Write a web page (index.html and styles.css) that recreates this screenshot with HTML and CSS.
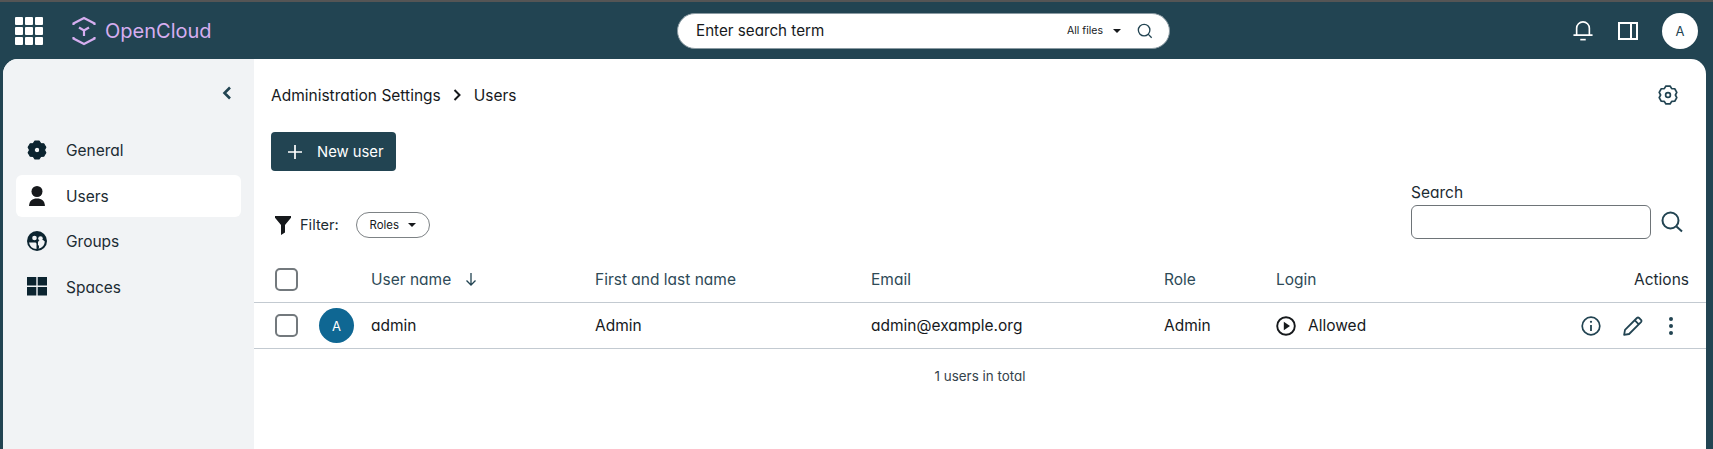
FILE: index.html
```html
<!DOCTYPE html>
<html lang="en">
<head>
<meta charset="utf-8">
<title>OpenCloud - Users</title>
<link rel="stylesheet" href="styles.css">
</head>
<body>
<header class="topbar">
  <div class="brand">
    <svg class="apps" viewBox="0 0 28 28"><g fill="#fff"><rect x="0" y="0" width="8" height="8" rx="1"/><rect x="10" y="0" width="8" height="8" rx="1"/><rect x="20" y="0" width="8" height="8" rx="1"/><rect x="0" y="10" width="8" height="8" rx="1"/><rect x="10" y="10" width="8" height="8" rx="1"/><rect x="20" y="10" width="8" height="8" rx="1"/><rect x="0" y="20" width="8" height="8" rx="1"/><rect x="10" y="20" width="8" height="8" rx="1"/><rect x="20" y="20" width="8" height="8" rx="1"/></g></svg>
    <svg class="logo" viewBox="0 0 24 30" fill="none" stroke="#d6aef0" stroke-width="2.2"><path d="M1.5 9V7.5L12 2l10.500 5.500V9"/><path d="M1.500 21v1.500L12 28l10.500-5.500V21"/><path d="M7 11.500l5 3 5-3M12 14.500V20"/></svg>
    <span class="brand-name">OpenCloud</span>
  </div>
  <div class="global-search">
    <span class="gs-text">Enter search term</span>
    <span class="gs-scope">All files</span>
    <span class="caret gs-caret"></span>
    <svg class="gs-icon" viewBox="0 0 18 18" fill="none" stroke="#224452" stroke-width="1.500"><circle cx="8" cy="8" r="6.500"/><path d="M12.500 12.500L16.500 16.500"/></svg>
  </div>
  <div class="top-actions">
    <svg class="icon-bell" viewBox="0 0 22 24" fill="none" stroke="#fff" stroke-width="1.800"><path d="M0.500 16.500h21M4 16.500V9a7 7 0 0 1 14 0v7.500"/><path d="M8 21.500h6"/></svg>
    <svg class="icon-panel" viewBox="0 0 20 18" fill="none" stroke="#fff" stroke-width="2"><rect x="1" y="1" width="18" height="16"/><path d="M13 1v16"/></svg>
    <span class="top-avatar">A</span>
  </div>
</header>

<div class="shell">
  <aside class="sidebar">
    <div class="collapse">
      <svg viewBox="0 0 10 14" fill="none" stroke="#224452" stroke-width="2.600"><path d="M8 1.500L2.500 7 8 12.500"/></svg>
    </div>
    <nav class="nav">
      <a class="nav-item">
        <svg viewBox="0 0 20 20"><path fill="#0c2430" stroke="#0c2430" stroke-width="1.200" stroke-linejoin="round" fill-rule="evenodd" d="M7.930 1.040L12.070 1.040L13.700 3.590L16.730 3.730L18.800 7.310L17.400 10L18.800 12.690L16.730 16.270L13.700 16.410L12.070 18.960L7.930 18.960L6.300 16.410L3.270 16.270L1.200 12.690L2.600 10L1.200 7.310L3.270 3.730L6.300 3.590ZM10 7.200a2.800 2.800 0 1 0 0 5.600a2.800 2.800 0 0 0 0-5.600Z"/></svg>
        <span>General</span>
      </a>
      <a class="nav-item nav-active">
        <svg viewBox="0 0 20 20"><circle cx="10" cy="5.500" r="5.500" fill="#16191c"/><path fill="#16191c" d="M2 21c0-6 3-8.500 8-8.500s8 2.500 8 8.500z"/></svg>
        <span>Users</span>
      </a>
      <a class="nav-item">
        <svg viewBox="0 0 20 20"><circle cx="10" cy="10" r="10" fill="#0c2430"/><circle cx="7.500" cy="7" r="2.300" fill="#f1f3f5"/><circle cx="13.500" cy="7.500" r="2.300" fill="#f1f3f5"/><path fill="#f1f3f5" d="M2 11.500h6.500a2 2 0 0 1 1 1.500v5A8 8 0 0 1 2 11.500zM11 11a4 4 0 0 1 6.800-.5 8 8 0 0 1-6.300 7.300c1-2 .5-3-.5-4z"/></svg>
        <span>Groups</span>
      </a>
      <a class="nav-item">
        <svg viewBox="0 0 20 20"><g fill="#0c2430"><rect width="9.300" height="8.500"/><rect x="10.700" width="9.300" height="8.500"/><rect y="10" width="9.300" height="8.500"/><rect x="10.700" y="10" width="9.300" height="8.500"/></g></svg>
        <span>Spaces</span>
      </a>
    </nav>
  </aside>

  <main class="content">
    <div class="crumb-row">
      <div class="crumbs">
        <span>Administration Settings</span>
        <svg class="crumb-sep" viewBox="0 0 8 12" fill="none" stroke="#16191c" stroke-width="2"><path d="M1.500 1l5 5-5 5"/></svg>
        <span>Users</span>
      </div>
      <svg class="gear" viewBox="0 0 20 20" fill="none" stroke="#224452" stroke-width="1.700" stroke-linejoin="round"><path d="M7.930 1.040L12.070 1.040L13.700 3.590L16.730 3.730L18.800 7.310L17.400 10L18.800 12.690L16.730 16.270L13.700 16.410L12.070 18.960L7.930 18.960L6.300 16.410L3.270 16.270L1.200 12.690L2.600 10L1.200 7.310L3.270 3.730L6.300 3.590Z"/><circle cx="10" cy="10" r="2.400"/></svg>
    </div>
    <button class="new-user">
      <svg viewBox="0 0 14 14" fill="none" stroke="#fff" stroke-width="1.700"><path d="M7 0v14M0 7h14"/></svg>
      <span>New user</span>
    </button>
    <div class="tools">
      <div class="filter">
        <svg class="funnel" viewBox="0 0 16 19"><path fill="#16191c" d="M0 0h16v1.800L10 9v7.500L6 19V9L0 1.800z"/></svg>
        <span class="filter-label">Filter:</span>
        <span class="pill">Roles<span class="caret"></span></span>
      </div>
      <div class="search">
        <label class="search-label">Search</label>
        <div class="search-row">
          <span class="search-input"></span>
          <svg class="search-icon" viewBox="0 0 22 22" fill="none" stroke="#224452" stroke-width="2"><circle cx="9.500" cy="9.500" r="8"/><path d="M15.500 15.500l5.500 5"/></svg>
        </div>
      </div>
    </div>

    <div class="table">
      <div class="row head">
        <span class="checkbox"></span>
        <span></span>
        <span class="name-head">User name
          <svg class="sort" viewBox="0 0 12 13" fill="none" stroke="#224452" stroke-width="1.300"><path d="M6 0v12M1.500 7.500L6 12l4.500-4.500"/></svg>
        </span>
        <span>First and last name</span>
        <span>Email</span>
        <span>Role</span>
        <span>Login</span>
        <span class="actions-head">Actions</span>
      </div>
      <div class="row body">
        <span class="checkbox"></span>
        <span class="avatar">A</span>
        <span>admin</span>
        <span>Admin</span>
        <span>admin@example.org</span>
        <span>Admin</span>
        <span class="login">
          <svg viewBox="0 0 20 20" fill="none" stroke="#16191c" stroke-width="1.900"><circle cx="10" cy="10" r="8.800"/><path fill="#16191c" stroke="none" d="M7.800 5.800L14 10l-6.200 4.200z"/></svg>
          Allowed
        </span>
        <span class="row-actions">
          <svg class="a-info" viewBox="0 0 20 20" fill="none" stroke="#224452" stroke-width="1.700"><circle cx="10" cy="10" r="8.800"/><path d="M10 9v6" stroke-width="1.800"/><circle cx="10" cy="5.800" r="1.100" fill="#224452" stroke="none"/></svg>
          <svg class="a-edit" viewBox="0 0 18 18" fill="none" stroke="#224452" stroke-width="1.600"><path d="M1 17l.8-4.500L12.500 1.800a1.500 1.500 0 0 1 2 0l1.700 1.700a1.500 1.500 0 0 1 0 2L5.500 16.200z" stroke-linejoin="round"/><path d="M10.500 3.800l3.700 3.700"/></svg>
          <svg class="a-more" viewBox="0 0 4 18"><g fill="#224452"><circle cx="2" cy="2" r="2"/><circle cx="2" cy="9" r="2"/><circle cx="2" cy="16" r="2"/></g></svg>
        </span>
      </div>
    </div>
    <p class="total">1 users in total</p>
  </main>
</div>
</body>
</html>
```

FILE: styles.css
```css
* { box-sizing: border-box; }
html, body { height: 100%; }
body {
  margin: 0;
  height: 449px;
  overflow: hidden;
  background: #224452;
  border-top: 2px solid #555;
  font-family: "Inter", "Lato", sans-serif;
  font-feature-settings: "cv11" 1;
  font-size: 15.500px;
  color: #16191c;
  display: flex;
  flex-direction: column;
}
svg { display: block; flex: none; }

.topbar {
  height: 57px;
  flex: none;
  display: flex;
  align-items: center;
  justify-content: space-between;
  padding: 0 15px 0 15px;
}
.brand { display: flex; align-items: center; width: 500px; }
.apps { width: 28px; height: 28px; }
.logo { width: 24px; height: 30px; margin-left: 29px; }
.brand-name { margin-left: 9px; color: #d6aef0; font-size: 20px; }

.global-search {
  width: 493px;
  height: 36px;
  background: #fff;
  border: 1px solid #8a9aa2;
  border-radius: 18px;
  display: flex;
  align-items: center;
  padding: 0 16px 0 18px;
  margin-left: 162px;
  margin-right: auto;
  font-size: 15.200px;
}
.gs-text { flex: 1; }
.gs-scope { font-size: 10.500px; }
.gs-caret { margin: 0 0 0 10px; }
.gs-icon { width: 16px; height: 16px; margin-left: 16px; }

.caret {
  display: inline-block;
  width: 0;
  height: 0;
  border-left: 4.500px solid transparent;
  border-right: 4.500px solid transparent;
  border-top: 4.500px solid #16191c;
}

.top-actions { display: flex; align-items: center; }
.icon-bell { width: 20px; height: 22px; }
.icon-panel { width: 20px; height: 18px; margin-left: 25px; }
.top-avatar {
  width: 36px;
  height: 36px;
  margin-left: 24px;
  background: #fff;
  border-radius: 50%;
  display: flex;
  align-items: center;
  justify-content: center;
  font-size: 13px;
  color: #224452;
}

.shell {
  flex: 1;
  margin: 0 7px 0 3px;
  background: #fff;
  border-radius: 15px 15px 0 0;
  overflow: hidden;
  display: flex;
}

.sidebar {
  width: 251px;
  flex: none;
  background: #f1f3f5;
  padding: 27px 13px 0 13px;
}
.collapse { display: flex; justify-content: flex-end; padding-right: 9px; height: 14px; }
.collapse svg { width: 10px; height: 14px; }
.nav { margin-top: 29px; display: flex; flex-direction: column; gap: 3.700px; }
.nav-item {
  height: 42px;
  display: flex;
  align-items: center;
  gap: 19px;
  padding-left: 11px;
  border-radius: 6px;
  font-size: 15.500px;
  color: #1c2b33;
}
.nav-item svg { width: 20px; height: 20px; }
.nav-item span { padding-top: 1px; }
.nav-active { background: #fff; }

.content { flex: 1; min-width: 0; display: flex; flex-direction: column; }
.crumb-row {
  display: flex;
  align-items: center;
  justify-content: space-between;
  padding: 25px 28px 0 17px;
  height: 47px;
}
.crumbs { display: flex; align-items: center; }
.crumb-sep { width: 8px; height: 12px; margin: 0 13px 0 12px; }
.gear { width: 20px; height: 20px; }

.new-user {
  align-self: flex-start;
  margin: 26px 0 0 17px;
  width: 125px;
  height: 39px;
  background: #224452;
  border: 0;
  border-radius: 4px;
  color: #fff;
  font: inherit;
  font-size: 14.800px;
  display: flex;
  align-items: center;
  padding: 0 0 0 17px;
  gap: 15px;
}
.new-user svg { width: 14px; height: 14px; }

.tools {
  display: flex;
  justify-content: space-between;
  align-items: flex-end;
  padding: 12px 23px 0 21px;
}
.filter { display: flex; align-items: center; padding-bottom: 1px; }
.funnel { width: 16px; height: 19px; }
.filter-label { margin-left: 9px; color: #1c2b33; font-size: 14.600px; }
.pill {
  margin-left: 17px;
  width: 74px;
  height: 26px;
  border: 1px solid #7d8285;
  border-radius: 13px;
  display: flex;
  align-items: center;
  justify-content: center;
  gap: 9px;
  font-size: 11.400px;
}
.search-label { display: block; line-height: 20px; color: #1c2b33; }
.search-row { display: flex; align-items: center; gap: 10px; margin-top: 2px; }
.search-input {
  width: 240px;
  height: 34px;
  border: 1px solid #6e7478;
  border-radius: 6px;
}
.search-icon { width: 22px; height: 22px; }

.table { margin-top: 18px; }
.row {
  display: grid;
  grid-template-columns: 44px 52px 224px 276px 293px 112px 1fr auto;
  align-items: center;
  padding: 0 17px 0 21px;
  border-bottom: 1px solid #c3cad1;
}
.head { height: 46px; color: #2e4a57; }
.body { height: 46px; }
.checkbox {
  width: 23px;
  height: 23px;
  border: 2px solid #73797d;
  border-radius: 5px;
  background: #fff;
}
.name-head { display: flex; align-items: center; gap: 14px; }
.sort { width: 12px; height: 13px; }
.actions-head { color: #1c2b33; }
.avatar {
  width: 35px;
  height: 35px;
  background: #0f6793;
  color: #fff;
  border-radius: 50%;
  display: flex;
  align-items: center;
  justify-content: center;
  font-size: 13px;
}
.login { display: flex; align-items: center; gap: 12px; }
.login svg { width: 20px; height: 20px; }
.row-actions { display: flex; align-items: center; padding-right: 16px; }
.a-info { width: 20px; height: 20px; }
.a-edit { width: 20px; height: 20px; margin-left: 22px; }
.a-more { width: 4px; height: 18px; margin-left: 26px; }

.total {
  margin: 19px 0 0;
  text-align: center;
  font-size: 13.400px;
  color: #35434b;
}
```
